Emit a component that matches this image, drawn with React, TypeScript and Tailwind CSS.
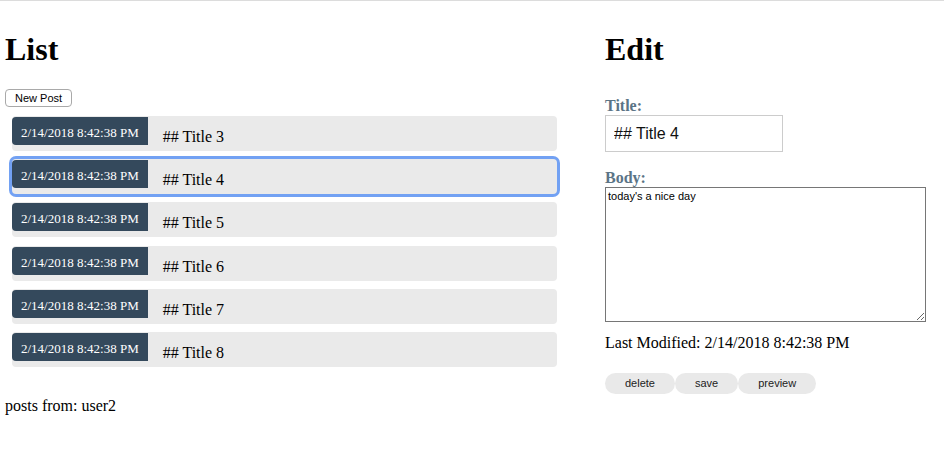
const posts = [
  { id: 3, title: "## Title 3" },
  { id: 4, title: "## Title 4" },
  { id: 5, title: "## Title 5" },
  { id: 6, title: "## Title 6" },
  { id: 7, title: "## Title 7" },
  { id: 8, title: "## Title 8" },
];

const stamp = "2/14/2018 8:42:38 PM";

function PostRow({ title, active }: { title: string; active: boolean }) {
  return (
    <li
      className={`flex items-start h-[35px] mb-[8.2px] bg-[#eaeaea] rounded-[4px] ${active ? "ring-[3px] ring-[#72a1f3]" : ""}`}
    >
      <span className="mt-[1px] h-[28px] px-[9px] pt-[8px] leading-[15px] text-[13px] text-white bg-[#34495c] rounded-l-[4px] whitespace-nowrap">
        {stamp}
      </span>
      <span className="ml-[15px] pt-[12px] leading-[18px] text-[16px] text-black">
        {title}
      </span>
    </li>
  );
}

export default function App() {
  return (
    <div className="min-h-[461px] w-[944px] border-t border-[#dcdcdc] bg-white font-['Liberation_Serif',serif] text-black">
      <div className="flex">
        <div className="w-[605px] pl-[5px]">
          <h1 className="mt-[30px] text-[32px] leading-[37px] font-bold">List</h1>
          <button className="block mt-[21px] h-[18px] px-[9px] border border-[#a9a9a9] rounded-[4px] bg-white font-['Liberation_Sans',sans-serif] text-[11px] leading-[16px] text-black">
            New Post
          </button>
          <ul className="mt-[9px] pl-[7px] w-[552px]">
            {posts.map((p) => (
              <PostRow key={p.id} title={p.title} active={p.id === 4} />
            ))}
          </ul>
          <p className="mt-[30px] text-[16px] leading-[18px]">posts from: user2</p>
        </div>

        <div className="flex-1">
          <h1 className="mt-[30px] text-[32px] leading-[37px] font-bold">Edit</h1>
          <label className="block mt-[29px] text-[16px] leading-[18px] font-bold text-[#5b7486]">
            Title:
          </label>
          <input
            readOnly
            value="## Title 4"
            className="block w-[178px] h-[37px] px-[8px] border border-[#cccccc] bg-white font-['Liberation_Sans',sans-serif] text-[16px] text-[#111] outline-none"
          />
          <label className="block mt-[17px] text-[16px] leading-[18px] font-bold text-[#5b7486]">
            Body:
          </label>
          <textarea
            readOnly
            value="today's a nice day"
            className="block w-[321px] h-[135px] p-[2px] border border-[#767676] bg-white font-['Liberation_Sans',sans-serif] text-[11px] leading-[13px] text-black outline-none"
          />
          <p className="mt-[12px] text-[16px] leading-[18px]">
            Last Modified: {stamp}
          </p>
          <div className="flex mt-[21px]">
            {["delete", "save", "preview"].map((b) => (
              <button
                key={b}
                className="h-[21px] px-[20px] rounded-full bg-[#e9e9e9] font-['Liberation_Sans',sans-serif] text-[11px] leading-[21px] text-[#222]"
              >
                {b}
              </button>
            ))}
          </div>
        </div>
      </div>
    </div>
  );
}
